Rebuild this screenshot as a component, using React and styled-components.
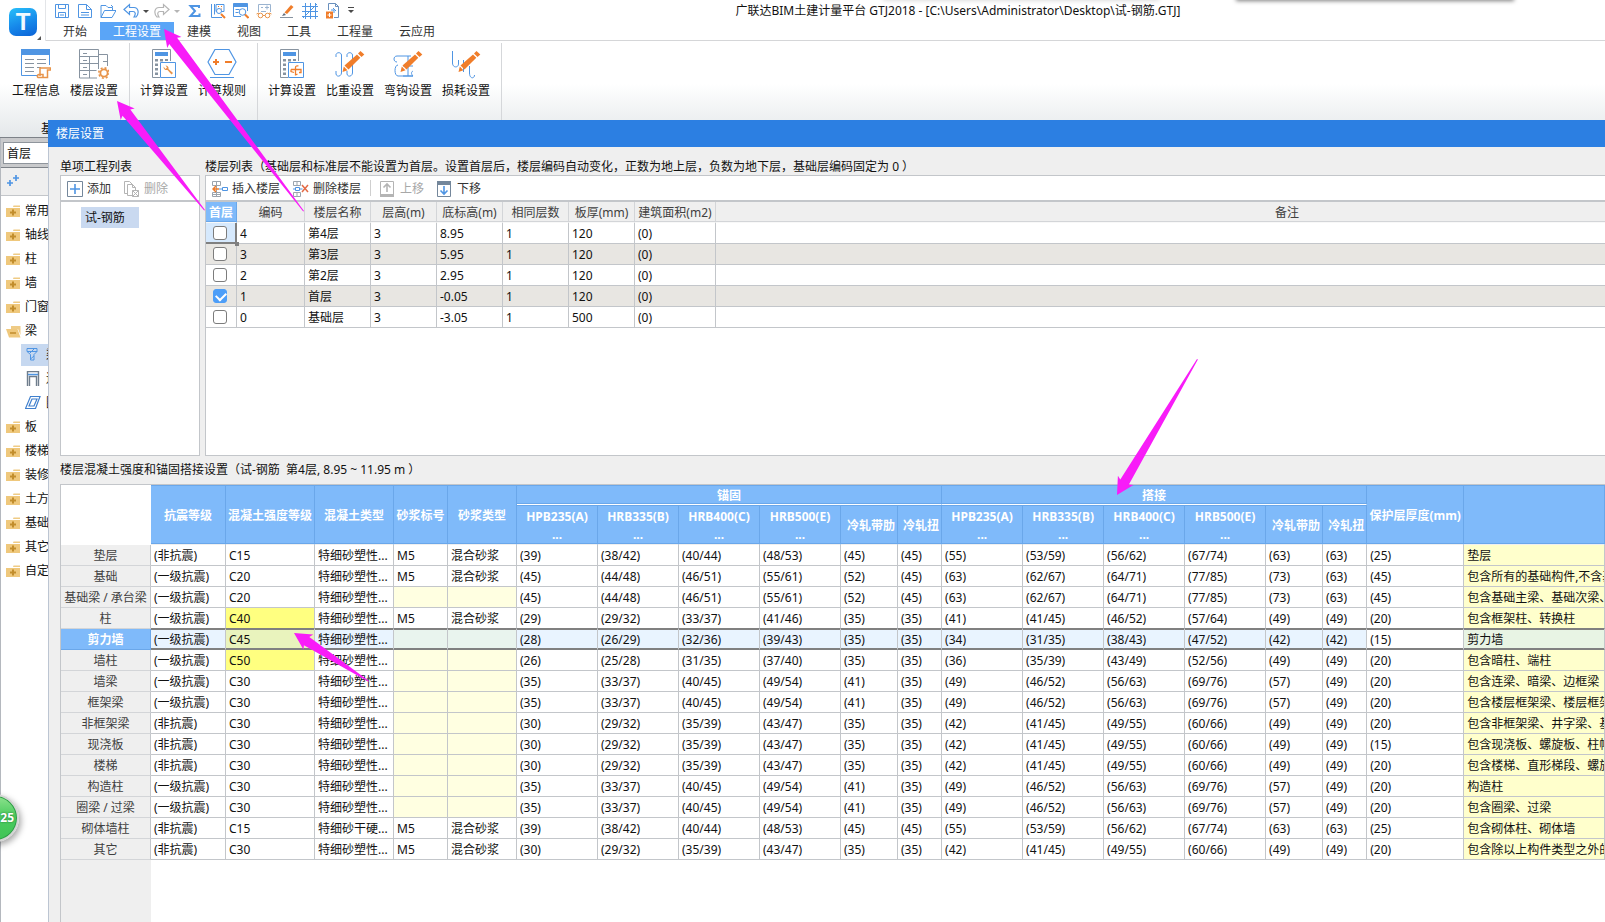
import React, { useState } from "react";
import styled, { createGlobalStyle, css } from "styled-components";

const GlobalStyle = createGlobalStyle`
  * {
    box-sizing: border-box;
  }

  body {
    margin: 0;
    background: #ffffff;
    color: #111111;
    font-family: "Noto Sans", "Noto Sans CJK SC", sans-serif;
    font-size: 12px;
    line-height: 16px;
    overflow: hidden;
  }

  button,
  select,
  input {
    margin: 0;
    font: inherit;
    color: inherit;
  }
`;

const BLUE = "#4f95e3";
const GREY = "#8793a0";
const ORANGE = "#f07d2a";

const tabs = ["开始", "工程设置", "建模", "视图", "工具", "工程量", "云应用"];

const ribbonGroups = [
    {
        caption: "基本设置",
        items: [
            { icon: "info", label: "工程信息" },
            { icon: "floors", label: "楼层设置" },
        ],
    },
    {
        caption: "土建设置",
        items: [
            { icon: "calc", label: "计算设置" },
            { icon: "rules", label: "计算规则" },
        ],
    },
    {
        caption: "钢筋设置",
        items: [
            { icon: "calcBar", label: "计算设置" },
            { icon: "weight", label: "比重设置" },
            { icon: "hook", label: "弯钩设置" },
            { icon: "loss", label: "损耗设置" },
        ],
    },
];

const tree = [
    { label: "常用类型" },
    { label: "轴线" },
    { label: "柱" },
    { label: "墙" },
    { label: "门窗洞" },
    {
        label: "梁",
        open: true,
        children: [
            { icon: "beam", label: "梁(L)", active: true },
            { icon: "lintel", label: "连梁(G)" },
            { icon: "ring", label: "圈梁(E)" },
        ],
    },
    { label: "板" },
    { label: "楼梯" },
    { label: "装修" },
    { label: "土方" },
    { label: "基础" },
    { label: "其它" },
    { label: "自定义" },
];

const floorColumns = [
    { title: "首层", width: 31 },
    { title: "编码", width: 68 },
    { title: "楼层名称", width: 66 },
    { title: "层高(m)", width: 66 },
    { title: "底标高(m)", width: 66 },
    { title: "相同层数", width: 66 },
    { title: "板厚(mm)", width: 66 },
    { title: "建筑面积(m2)", width: 81 },
    { title: "备注" },
];

const floors = [
    ["4", "第4层", "3", "8.95", "1", "120", "(0)", ""],
    ["3", "第3层", "3", "5.95", "1", "120", "(0)", ""],
    ["2", "第2层", "3", "2.95", "1", "120", "(0)", ""],
    ["1", "首层", "3", "-0.05", "1", "120", "(0)", ""],
    ["0", "基础层", "3", "-3.05", "1", "500", "(0)", ""],
];

const strengthWidths = [90, 75, 89, 79, 54, 69, 81, 81, 81, 81, 57, 44, 81, 81, 81, 81, 57, 44, 97];

const steelTypes = ["HPB235(A)", "HRB335(B)", "HRB400(C)", "HRB500(E)", "冷轧带肋", "冷轧扭"];

const MIX = "特细砂塑性...";
const L1 = "(一级抗震)";
const L0 = "(非抗震)";

const members = [
    { name: "垫层", level: L0, grade: "C15", mix: MIX, mortar: true, values: "39 38/42 40/44 48/53 45 45 55 53/59 56/62 67/74 63 63 25", note: "垫层" },
    { name: "基础", level: L1, grade: "C20", mix: MIX, mortar: true, values: "45 44/48 46/51 55/61 52 45 63 62/67 64/71 77/85 73 63 45", note: "包含所有的基础构件,不含基础梁" },
    { name: "基础梁 / 承台梁", level: L1, grade: "C20", mix: MIX, values: "45 44/48 46/51 55/61 52 45 63 62/67 64/71 77/85 73 63 45", note: "包含基础主梁、基础次梁、承台梁" },
    { name: "柱", level: L1, grade: "C40", edited: true, mix: MIX, mortar: true, values: "29 29/32 33/37 41/46 35 35 41 41/45 46/52 57/64 49 49 20", note: "包含框架柱、转换柱" },
    { name: "剪力墙", level: L1, grade: "C45", edited: true, selected: true, mix: MIX, values: "28 26/29 32/36 39/43 35 35 34 31/35 38/43 47/52 42 42 15", note: "剪力墙" },
    { name: "墙柱", level: L1, grade: "C50", edited: true, mix: MIX, values: "26 25/28 31/35 37/40 35 35 36 35/39 43/49 52/56 49 49 20", note: "包含暗柱、端柱" },
    { name: "墙梁", level: L1, grade: "C30", mix: MIX, values: "35 33/37 40/45 49/54 41 35 49 46/52 56/63 69/76 57 49 20", note: "包含连梁、暗梁、边框梁" },
    { name: "框架梁", level: L1, grade: "C30", mix: MIX, values: "35 33/37 40/45 49/54 41 35 49 46/52 56/63 69/76 57 49 20", note: "包含楼层框架梁、楼层框架扁梁" },
    { name: "非框架梁", level: L0, grade: "C30", mix: MIX, values: "30 29/32 35/39 43/47 35 35 42 41/45 49/55 60/66 49 49 20", note: "包含非框架梁、井字梁、基础联系梁" },
    { name: "现浇板", level: L0, grade: "C30", mix: MIX, values: "30 29/32 35/39 43/47 35 35 42 41/45 49/55 60/66 49 49 15", note: "包含现浇板、螺旋板、柱帽" },
    { name: "楼梯", level: L0, grade: "C30", mix: MIX, values: "30 29/32 35/39 43/47 35 35 42 41/45 49/55 60/66 49 49 20", note: "包含楼梯、直形梯段、螺旋梯段" },
    { name: "构造柱", level: L1, grade: "C30", mix: MIX, values: "35 33/37 40/45 49/54 41 35 49 46/52 56/63 69/76 57 49 20", note: "构造柱" },
    { name: "圈梁 / 过梁", level: L1, grade: "C30", mix: MIX, values: "35 33/37 40/45 49/54 41 35 49 46/52 56/63 69/76 57 49 20", note: "包含圈梁、过梁" },
    { name: "砌体墙柱", level: L0, grade: "C15", mix: "特细砂干硬...", mortar: true, values: "39 38/42 40/44 48/53 45 45 55 53/59 56/62 67/74 63 63 25", note: "包含砌体柱、砌体墙" },
    { name: "其它", level: L0, grade: "C30", mix: MIX, mortar: true, values: "30 29/32 35/39 43/47 35 35 42 41/45 49/55 60/66 49 49 20", note: "包含除以上构件类型之外的所有构件" },
];

const arrows = [
    { tip: [164, 29], tail: [304, 211] },
    { tip: [117, 101], tail: [205, 210] },
    { tip: [294, 633], tail: [369, 681] },
    { tip: [1117, 495], tail: [1197, 359] },
];

/* tapered arrow: wide head at the tip, body thinning to nothing at the tail */
function arrowPoints({ tip, tail }) {
    const dx = tail[0] - tip[0];
    const dy = tail[1] - tip[1];
    const len = Math.hypot(dx, dy);
    const at = (along, side) => {
        const x = tip[0] + (dx * along - dy * side) / len;
        const y = tip[1] + (dy * along + dx * side) / len;
        return `${x.toFixed(1)},${y.toFixed(1)}`;
    };
    return [at(0, 0), at(17, 9), at(15, 5), at(len, 1), at(len, 0), at(15, -5), at(17, -9)].join(" ");
}

const pencil = (
    <g>
        <path d="M9.500 16.500 22 5.500l3.300 3.300L13.500 20.500z" fill={ORANGE} />
        <path d="M23 4.500 25.500 2 29.300 5.500 26.500 8z" fill={ORANGE} />
        <path d="M8.800 17.500l3.700 3.700L7.500 23z" fill={ORANGE} />
    </g>
);

const calculator = (
    <g>
        <path d="M8 28.500H.5V.5h18V12" fill="none" stroke={GREY} />
        <path d="M3 3h13v4H3z" fill={BLUE} />
        <path
            d="M3 10h3v2.500H3zM8 10h3v2.500H8zM13 10h3v2H13zM3 14.500h3V17H3zM3 19h3v2.500H3zM3 23.500h3V26H3z"
            fill={GREY}
        />
        <path d="M8.500 13.500h15v15h-15z" fill="#fff" stroke={BLUE} />
    </g>
);

const ribbonIcons = {
    info: (
        <g fill="none">
            <path d="M.5 6v20.500H16M28.500 6v10" stroke={BLUE} />
            <path d="M0 0h29v6H0z" fill={BLUE} />
            <path
                d="M4 10.500h9M4 14.500h9M4 18.500h9M4 22.500h9M16 10.500h9M16 14.500h9M16 18.500h4"
                stroke={GREY}
            />
            <path
                d="M19 27V19h10.500v2h-3v7.500H17c-1.500-1.500 0-3.500 1.500-3H22v3"
                stroke="#e8944a"
                strokeWidth="1.500"
            />
        </g>
    ),
    floors: (
        <g fill="none" stroke={GREY}>
            <path d="M18 29H.5V.5h19V20M.5 7.500h19M.5 14.500h19M.5 21.500h17M10.500 7.500V29M4 4.500h4M4 11.500h4M4 18.500h4M4 25.500h4" />
            <path d="M20 5.500h8.500V17M24 12.500h4" />
            <circle cx="25" cy="24" r="3.600" stroke="#e8944a" strokeWidth="1.800" />
            <circle cx="25" cy="24" r="5.200" stroke="#e8944a" strokeWidth="1.600" strokeDasharray="2 2.080" />
        </g>
    ),
    calc: (
        <g transform="translate(3 0)">
            {calculator}
            <path
                d="M11.500 17.500c0 3 2 4 4 3.500l4 4.500 1.500-1.500-4.500-4c.5-2-1-3.500-3-3.500l1.500 2-1.500 1.500z"
                fill="#e8944a"
            />
        </g>
    ),
    rules: (
        <g fill="none">
            <path d="M8 .5h14l7 12.500-7 12.500H8L1 13z" stroke={BLUE} strokeWidth="1.200" />
            <path d="M3 28.500h24" stroke={BLUE} />
            <path d="M6 13h6M9 10v6M18 13h7" stroke={ORANGE} strokeWidth="2" />
        </g>
    ),
    calcBar: (
        <g fill="none" transform="translate(3 0)">
            {calculator}
            <path
                d="M11 20.500h10v3h-2M11 20.500v2l3 1M15.500 26.500v-8c0-1.500 1.500-2 3-1.500M15.500 26l2-1"
                stroke={ORANGE}
                strokeWidth="1.300"
            />
        </g>
    ),
    weight: (
        <g fill="none">
            <path
                d="M1 8V5.500C2 3 6 3 6.500 6v18c-.5 4-5 4-5.500 1v-3M12 8V5.500C13 3 17 3 17.500 6v18c-.5 4-5 4-5.500 1v-3"
                stroke={BLUE}
            />
            {pencil}
        </g>
    ),
    hook: (
        <g fill="none">
            <path
                d="M4 13C0 13 0 7 4 7h14M5 16c-4 0-4 11 0 11h15c-2-2-2-4 0-5M15 7v20M10 17h10M10 27h10"
                stroke={BLUE}
            />
            {pencil}
        </g>
    ),
    loss: (
        <g fill="none">
            <path
                d="M1.500 2v12c0 5 6 5 6 1V11M12.500 11v12M18.500 17v7c0 6 5 6 5 2"
                stroke={BLUE}
            />
            {pencil}
        </g>
    ),
};

const quickIcons = {
    save: (
        <g fill="none" stroke={BLUE}>
            <path d="M1.500 1.500h13v13h-13zM4.500 1.500v4h7v-4M4.500 14.500v-5h7v5M6 12h4" />
        </g>
    ),
    create: (
        <g fill="none" stroke={BLUE}>
            <path d="M1.500 1.500h8l5 5v8h-13zM9.500 1.500v5h5M4 9.500h8M4 12h8" />
        </g>
    ),
    open: (
        <g fill="none" stroke={BLUE}>
            <path d="M1 14.500V2.500h5l2 2h4.500v3M1 14.500 4.500 7.500H16l-4 7zM11 2l2 2" />
        </g>
    ),
    undo: (
        <path
            d="M1 6.500 6.500 1.500v3h4.500c4.500 0 5.500 6 2 9.500h-2c2-3 1.500-5.500-1-5.500H6.500v3z"
            fill="none"
            stroke={BLUE}
            strokeWidth="1.200"
        />
    ),
    redo: (
        <path
            d="M15 6.500 9.500 1.500v3H5c-4.500 0-5.500 6-2 9.500h2c-2-3-1.500-5.500 1-5.500h3.500v3z"
            fill="none"
            stroke="#b5b5b5"
            strokeWidth="1.200"
        />
    ),
    sum: <path d="M12 5V3H3.500L8 8l-4.500 5H12.500v-2.500" fill="none" stroke={BLUE} strokeWidth="2" />,
    measure: (
        <g fill="none" stroke={BLUE}>
            <path d="M1.500 1v13.500H12M4.500 1v10.500M6 1.500h8v7H6z" />
            <path d="M8 3.500h1M11 3.500h1M8 6h1M11 6h1" stroke={ORANGE} />
            <circle cx="9" cy="8" r="2.500" fill="#fff" />
            <path d="M11 11l4 4" stroke={ORANGE} strokeWidth="2" />
        </g>
    ),
    find: (
        <g fill="none" stroke={BLUE}>
            <path d="M.5.5h14v3H.5z" fill={BLUE} />
            <path d="M.5 3v10.500H8M14.500 3v5M2.500 6.500h4M2.500 9.500h3" />
            <circle cx="9.500" cy="9" r="3.300" />
            <path d="M12 11.500l3.500 3.500" stroke={ORANGE} strokeWidth="2" />
        </g>
    ),
    review: (
        <g fill="none" stroke="#9bb4d0">
            <path d="M2.500 9V1.500h12V9M5 4.500h2M9 4.500h4M11 2.500v4M5 8.500h5" />
            <path d="M.5 11l2.500-1M15.500 11 13 10M7 12.500h2" stroke="#e8944a" />
            <circle cx="4.500" cy="12.500" r="2.300" stroke="#e8944a" />
            <circle cx="11.500" cy="12.500" r="2.300" stroke="#e8944a" />
        </g>
    ),
    brush: (
        <g fill="none">
            <path d="M5.500 9.500 12 2l2.500 2L8 11z" fill={ORANGE} />
            <path d="M5 10l2 2-4 1z" fill="#5e6a78" />
            <path d="M1 14.500h13" stroke={GREY} />
        </g>
    ),
    grid: (
        <path
            d="M0 3.500h16M0 8.500h16M0 13.500h16M3.500 0v16M8.500 0v16M13.500 0v16M1 15 15 1"
            fill="none"
            stroke={BLUE}
        />
    ),
    addPage: (
        <g fill="none">
            <path d="M3.500 7V.5h7l3 3v11H9M10.500.5v3h3" stroke="#6a90bd" />
            <path d="M6 7h3v3M8 5l3 3" stroke={BLUE} />
            <path d="M1 8.500h7v7H1z" fill={ORANGE} />
            <path d="M4.500 10v4M2.500 12h4" stroke="#fff" />
        </g>
    ),
};

const toolIcons = {
    add: (
        <g fill="none">
            <path d="M.5.5h15v15H.5z" stroke="#74879b" />
            <path d="M8 3v10M3 8h10" stroke={BLUE} strokeWidth="1.600" />
        </g>
    ),
    remove: (
        <g fill="none" stroke="#b4b4b4">
            <path d="M3 12.500H.5V.5h5L9 4M3.500 3.500h5l3 3V9M3.500 3.500v11H8M8.500 3.500v3h3" />
            <path d="M8.500 9.500h6v6h-6zM8.500 9.500l6 6M14.500 9.500l-6 6" />
        </g>
    ),
    insertFloor: (
        <g fill="none" stroke="#9ba4ad">
            <path d="M.5.5h8v4h-8zM4.500.5v4M.5 11.500h8v4h-8zM4.500 11.500v4M.5 13.500h8M4.500 4.500v7" />
            <path d="M1 8h6M4 5 1 8l3 3" stroke={ORANGE} strokeWidth="1.500" />
            <path d="M7 8h3M10.500 6.500h5v3h-5z" stroke={BLUE} />
        </g>
    ),
    deleteFloor: (
        <g fill="none" stroke="#9ba4ad">
            <path d="M.5.5h7v4h-7zM4 .5v4M.5 11.500h7v4h-7zM4 11.500v4" />
            <path d="M2.500 6.500h4v3h-4zM0 8h2M6.500 8h3" stroke={BLUE} />
            <path d="M9 4l6 7M15 4l-6 7" stroke="#e36a45" strokeWidth="1.500" />
        </g>
    ),
    up: (
        <g fill="none" stroke="#b4b4b4">
            <path d="M.5.5h13v15H.5z" />
            <path d="M0 13h14v3H0z" fill="#b4b4b4" stroke="none" />
            <path d="M7 11V3M3.500 6.500 7 3l3.500 3.500" strokeWidth="1.600" />
        </g>
    ),
    down: (
        <g fill="none" stroke="#74879b">
            <path d="M.5.5h13v15H.5z" />
            <path d="M0 0h14v4H0z" fill="#74879b" stroke="none" />
            <path d="M7 5v8M3.500 9.500 7 13l3.500-3.500" stroke={BLUE} strokeWidth="1.600" />
        </g>
    ),
};

const treeIcons = {
    closed: (
        <g>
            <path d="M7.500 1.500H14V3H7z" fill="#efcb85" />
            <path d="M0 4h14v9H0z" fill="#efc87c" />
            <path d="M4 8.500h6M7 5.500v6" stroke="#c28d2c" strokeWidth="2" />
        </g>
    ),
    open: (
        <g>
            <path d="M5 2h9.500v9L12 5H5z" fill="#efcb85" />
            <path d="M0 5h11.500L14.500 13.500H3z" fill="#efc87c" />
            <path d="M4 9h6" stroke="#c28d2c" strokeWidth="1.500" />
        </g>
    ),
    beam: <path d="M2 1.500h10v3L9 7.500v5.500H5.500V7.500L2 4.500zM2 4.500h10M5.500 12l3.500-3M5 6l4-4" fill="none" stroke={BLUE} />,
    lintel: (
        <g fill="none">
            <path d="M2.500 15V.5h11V15M4.500 15V5.500h7V15" stroke="#6f7d8c" strokeWidth="1.400" />
            <path d="M3 3.500h10" stroke={BLUE} strokeWidth="1.500" />
        </g>
    ),
    ring: <path d="M5.500 1.500H15l-4.500 12H.5zM7 4h5l-3 7H4z" fill="none" stroke="#3f7fcd" strokeWidth="1.200" />,
};

function Icon({ set, name, size = 16 }) {
    return (
        <svg width={size} height={size} viewBox={`0 0 ${size} ${size}`} aria-hidden="true">
            {set[name]}
        </svg>
    );
}

function QuickAccess() {
    return (
        <QuickBar>
            {["save", "create", "open", "undo"].map((name) => (
                <QuickButton key={name} aria-label={name}>
                    <Icon set={quickIcons} name={name} />
                </QuickButton>
            ))}
            <Caret />
            <QuickButton aria-label="redo">
                <Icon set={quickIcons} name="redo" />
            </QuickButton>
            <Caret $faded />
            {["sum", "measure", "find", "review", "brush", "grid", "addPage"].map((name) => (
                <QuickButton key={name} aria-label={name}>
                    <Icon set={quickIcons} name={name} />
                </QuickButton>
            ))}
            <Caret $barred />
        </QuickBar>
    );
}

function Sidebar() {
    return (
        <SidePanel>
            <FloorPicker>
                <FloorSelect aria-label="楼层" defaultValue="首层">
                    <option>首层</option>
                </FloorSelect>
            </FloorPicker>
            <SideTools>
                <svg width="13" height="13" viewBox="0 0 13 13" aria-hidden="true">
                    <path d="M0 9h6M3 6v6M6 4h6M9 1v6" stroke={BLUE} strokeWidth="1.700" />
                </svg>
            </SideTools>
            <TreeList>
                {tree.map((node) => (
                    <React.Fragment key={node.label}>
                        <TreeItem>
                            <Icon set={treeIcons} name={node.open ? "open" : "closed"} size={15} />
                            {node.label}
                        </TreeItem>
                        {node.children?.map((child) => (
                            <TreeChild key={child.label} $active={child.active}>
                                <Icon set={treeIcons} name={child.icon} size={16} />
                                {child.label}
                            </TreeChild>
                        ))}
                    </React.Fragment>
                ))}
            </TreeList>
        </SidePanel>
    );
}

function FloorTable() {
    const [first, setFirst] = useState("1");

    return (
        <WideGrid>
            <colgroup>
                {floorColumns.map((col) => (
                    <col key={col.title} width={col.width} />
                ))}
            </colgroup>
            <thead>
                <tr>
                    {floorColumns.map((col, i) => (
                        <FloorHead key={col.title} $active={i === 0}>
                            {col.title}
                        </FloorHead>
                    ))}
                </tr>
            </thead>
            <tbody>
                {floors.map((row, i) => (
                    <FloorRow key={row[0]}>
                        <CheckCell $focused={i === 0}>
                            <CheckBox
                                type="checkbox"
                                aria-label={`首层 ${row[1]}`}
                                checked={first === row[0]}
                                onChange={() => setFirst(row[0])}
                            />
                        </CheckCell>
                        {row.map((value, c) => (
                            <Cell key={c}>{value}</Cell>
                        ))}
                    </FloorRow>
                ))}
            </tbody>
        </WideGrid>
    );
}

function StrengthTable() {
    return (
        <Grid>
            <colgroup>
                {strengthWidths.map((width, i) => (
                    <col key={i} width={width} />
                ))}
                <col />
            </colgroup>
            <thead>
                <GroupRow>
                    <Corner rowSpan={2} />
                    {["抗震等级", "混凝土强度等级", "混凝土类型", "砂浆标号", "砂浆类型"].map((title) => (
                        <BlueHead key={title} rowSpan={2}>
                            {title}
                        </BlueHead>
                    ))}
                    <GroupHead colSpan={6}>锚固</GroupHead>
                    <GroupHead colSpan={6}>搭接</GroupHead>
                    <BlueHead rowSpan={2}>保护层厚度(mm)</BlueHead>
                    <BlueHead rowSpan={2} />
                </GroupRow>
                <SteelRow>
                    {[...steelTypes, ...steelTypes].map((title, i) => (
                        <SteelHead key={i} $right={i % 6 > 3}>
                            {title}
                            {i % 6 < 4 && <More>...</More>}
                        </SteelHead>
                    ))}
                </SteelRow>
            </thead>
            <tbody>
                {members.map((m, i) => (
                    <MemberRow key={m.name} $selected={m.selected} $above={members[i + 1]?.selected}>
                        <RowHead scope="row" $selected={m.selected}>
                            {m.name}
                        </RowHead>
                        <Cell>{m.level}</Cell>
                        <Cell $tone={m.edited && "edited"}>{m.grade}</Cell>
                        <Cell>{m.mix}</Cell>
                        <Cell $tone={!m.mortar && "locked"}>{m.mortar && "M5"}</Cell>
                        <Cell $tone={!m.mortar && "locked"}>{m.mortar && "混合砂浆"}</Cell>
                        {m.values.split(" ").map((value, c) => (
                            <Cell key={c}>({value})</Cell>
                        ))}
                        <Cell $tone="note">{m.note}</Cell>
                    </MemberRow>
                ))}
            </tbody>
        </Grid>
    );
}

function FloorDialog() {
    return (
        <Dialog role="dialog" aria-label="楼层设置">
            <DialogTitle>楼层设置</DialogTitle>
            <DialogBody>
                <Upper>
                    <ProjectColumn>
                        <PanelLabel>单项工程列表</PanelLabel>
                        <Panel>
                            <ToolBar>
                                <ToolButton>
                                    <Icon set={toolIcons} name="add" />
                                    添加
                                </ToolButton>
                                <ToolButton disabled>
                                    <Icon set={toolIcons} name="remove" />
                                    删除
                                </ToolButton>
                            </ToolBar>
                            <ProjectItem>试-钢筋</ProjectItem>
                        </Panel>
                    </ProjectColumn>
                    <FloorColumn>
                        <PanelLabel>
                            楼层列表（基础层和标准层不能设置为首层。设置首层后，楼层编码自动变化，正数为地上层，负数为地下层，基础层编码固定为 0 ）
                        </PanelLabel>
                        <Panel $open>
                            <ToolBar>
                                <ToolButton>
                                    <Icon set={toolIcons} name="insertFloor" />
                                    插入楼层
                                </ToolButton>
                                <ToolButton>
                                    <Icon set={toolIcons} name="deleteFloor" />
                                    删除楼层
                                </ToolButton>
                                <ToolDivider />
                                <ToolButton disabled>
                                    <Icon set={toolIcons} name="up" />
                                    上移
                                </ToolButton>
                                <ToolButton>
                                    <Icon set={toolIcons} name="down" />
                                    下移
                                </ToolButton>
                            </ToolBar>
                            <FloorTable />
                        </Panel>
                    </FloorColumn>
                </Upper>
                <StrengthLabel>楼层混凝土强度和锚固搭接设置（试-钢筋&nbsp; 第4层, 8.95 ~ 11.95 m ）</StrengthLabel>
                <StrengthPanel>
                    <StrengthTable />
                    <GutterFill />
                </StrengthPanel>
            </DialogBody>
        </Dialog>
    );
}

export default function App() {
    const [tab, setTab] = useState("工程设置");

    return (
        <Window>
            <GlobalStyle />
            <TopBar>
                <LogoCell>
                    <Logo>T</Logo>
                    <LogoCorner />
                </LogoCell>
                <TopColumn>
                    <TitleRow>
                        <QuickAccess />
                        <WindowTitle>
                            广联达BIM土建计量平台 GTJ2018 - [C:\Users\Administrator\Desktop\试-钢筋.GTJ]
                        </WindowTitle>
                    </TitleRow>
                    <TabRow>
                        {tabs.map((name) => (
                            <Tab key={name} $active={name === tab} onClick={() => setTab(name)}>
                                {name}
                            </Tab>
                        ))}
                    </TabRow>
                </TopColumn>
            </TopBar>
            <Ribbon>
                {ribbonGroups.map((group) => (
                    <RibbonGroup key={group.caption}>
                        <RibbonItems>
                            {group.items.map((item) => (
                                <RibbonButton key={item.icon}>
                                    <Icon set={ribbonIcons} name={item.icon} size={30} />
                                    {item.label}
                                </RibbonButton>
                            ))}
                        </RibbonItems>
                        <GroupCaption>{group.caption}</GroupCaption>
                    </RibbonGroup>
                ))}
            </Ribbon>
            <Sidebar />
            <FloorDialog />
            <EdgeShadow />
            <SpeedBall>25</SpeedBall>
            <ArrowLayer aria-hidden="true">
                {arrows.map((arrow) => (
                    <polygon key={arrow.tip.join()} points={arrowPoints(arrow)} fill="#f81cf8" />
                ))}
            </ArrowLayer>
        </Window>
    );
}

const Window = styled.div`
  position: relative;
  display: flex;
  flex-direction: column;
  height: 100vh;
  overflow: hidden;
`;

const TopBar = styled.header`
  display: flex;
  height: 41px;
`;

const LogoCell = styled.div`
  position: relative;
  width: 46px;
  padding: 8px 0 0 9px;
  border-right: 1px solid #e3e5e8;
`;

const Logo = styled.div`
  width: 28px;
  height: 28px;
  border-radius: 7px;
  background: linear-gradient(160deg, #28c0fa, #1688ea 55%, #0c62d6);
  color: #f2faff;
  font-family: "Liberation Sans", sans-serif;
  font-size: 24px;
  font-weight: 700;
  line-height: 28px;
  text-align: center;
`;

const LogoCorner = styled.span`
  position: absolute;
  right: 4px;
  bottom: 1px;
  border: 2px solid #555555;
  border-top-color: transparent;
  border-left-color: transparent;
`;

const TopColumn = styled.div`
  flex: 1;
  min-width: 0;
  padding-left: 4px;
  border-bottom: 1px solid #d5d6d8;
`;

const TitleRow = styled.div`
  display: flex;
  align-items: center;
  height: 22px;
`;

const QuickBar = styled.div`
  display: flex;
  align-items: center;
`;

const QuickButton = styled.button`
  display: flex;
  justify-content: center;
  width: 23px;
  padding: 0;
  border: 0;
  background: none;
`;

const Caret = styled.span`
  width: 6px;
  height: 3px;
  margin: 0 ${(p) => (p.$faded ? 3 : 1)}px 0 ${(p) => (p.$barred ? 4 : 1)}px;
  border: 3px solid transparent;
  border-top-color: ${(p) => (p.$faded ? "#b5b5b5" : "#4a4a4a")};
  border-bottom: 0;
  ${(p) => p.$barred && "box-shadow: 0 -2px 0 #ffffff, 0 -3px 0 #4a4a4a;"}
`;

const WindowTitle = styled.div`
  flex: 1;
  padding-right: 44px;
  text-align: center;
  white-space: nowrap;
`;

const TabRow = styled.nav`
  display: flex;
  height: 18px;
`;

const Tab = styled.button`
  padding: 2px 13px 0;
  border: 0;
  background: ${(p) => (p.$active ? "#5aa5f7" : "none")};
  color: ${(p) => (p.$active ? "#ffffff" : "#333333")};
  line-height: 16px;
`;

const Ribbon = styled.div`
  display: flex;
  height: 97px;
  padding-left: 2px;
  border-bottom: 1px solid #7d8288;
  background: linear-gradient(#ffffff 45%, #e4e8ea);
`;

const RibbonGroup = styled.section`
  display: flex;
  flex-direction: column;
  justify-content: space-between;
  margin-top: 2px;
  padding: 6px 6px 0 5px;
  border-right: 1px solid #d5d7da;
`;

const RibbonItems = styled.div`
  display: flex;
`;

const RibbonButton = styled.button`
  display: flex;
  flex-direction: column;
  align-items: center;
  gap: 4px;
  width: 58px;
  padding: 0;
  border: 0;
  background: none;
  white-space: nowrap;
`;

const GroupCaption = styled.div`
  text-align: center;
`;

const SidePanel = styled.aside`
  display: flex;
  flex: 1;
  flex-direction: column;
  width: 180px;
  border-left: 1px solid #b4b8be;
`;

const FloorPicker = styled.div`
  height: 30px;
  padding: 4px 2px;
  border-bottom: 1px solid #7d8288;
  background: #c9cacc;
`;

const FloorSelect = styled.select`
  width: 110px;
  height: 22px;
  padding: 2px 3px 0;
  border: 1px solid #8f959c;
  border-radius: 0;
  background: #ffffff;
  appearance: none;
`;

const SideTools = styled.div`
  height: 28px;
  padding: 6px;
  border-bottom: 1px solid #c3c6ca;
  background: #efefef;
`;

const TreeList = styled.ul`
  display: flex;
  flex-direction: column;
  margin: 0;
  padding: 3px 0 0;
  list-style: none;
`;

const TreeItem = styled.li`
  display: flex;
  align-items: center;
  gap: 4px;
  height: 24px;
  padding-left: 5px;
`;

const TreeChild = styled.li`
  display: flex;
  align-items: center;
  gap: 5px;
  height: 22px;
  margin: 1px 0 1px 20px;
  padding-left: 4px;
  background: ${(p) => (p.$active ? "#c6d8f0" : "none")};
`;

const Dialog = styled.section`
  position: absolute;
  inset: 120px 0 0 48px;
  display: flex;
  flex-direction: column;
  border-left: 1px solid #bcc5d2;
  background: #efefef;
`;

const DialogTitle = styled.h1`
  margin: 0 0 0 -1px;
  padding: 1px 0 0 8px;
  background: #2c7fe2;
  color: #ffffff;
  font-size: 12px;
  font-weight: 400;
  line-height: 26px;
`;

const DialogBody = styled.div`
  display: flex;
  flex: 1;
  flex-direction: column;
  min-height: 0;
  padding-left: 11px;
`;

const Upper = styled.div`
  display: flex;
  gap: 5px;
`;

const ProjectColumn = styled.div`
  width: 140px;
`;

const FloorColumn = styled.div`
  flex: 1;
  min-width: 0;
`;

const PanelLabel = styled.h2`
  margin: 0;
  padding-top: 12px;
  font-size: 12px;
  font-weight: 400;
  line-height: 16px;
  white-space: nowrap;
`;

const StrengthLabel = styled(PanelLabel)`
  padding: 6px 0;
`;

const Panel = styled.div`
  height: 281px;
  border: 1px solid #c3c6ca;
  border-right-width: ${(p) => (p.$open ? 0 : 1)}px;
  background: #ffffff;
  overflow: hidden;
`;

const ToolBar = styled.div`
  display: flex;
  align-items: center;
  gap: 3px;
  height: 26px;
  padding: 0 1px;
  border-bottom: 2px solid #c3c6ca;
`;

const ToolButton = styled.button`
  display: flex;
  align-items: center;
  gap: 4px;
  padding: 1px 5px 0;
  border: 0;
  background: none;
  color: #333333;

  &:disabled {
    color: #a8a8a8;
  }
`;

const ToolDivider = styled.span`
  width: 1px;
  height: 16px;
  margin: 0 1px;
  background: #cfcfcf;
`;

const ProjectItem = styled.div`
  width: 58px;
  margin: 5px 0 0 20px;
  padding-left: 4px;
  background: #c9d9f0;
  line-height: 21px;
`;

const Grid = styled.table`
  width: 100%;
  border-spacing: 0;
  table-layout: fixed;
`;

/* the remark column runs on past the edge of the window */
const WideGrid = styled(Grid)`
  width: calc(100% + 254px);
`;

const FloorHead = styled.th`
  height: 21px;
  padding: 2px 0 0;
  border-right: 1px solid ${(p) => (p.$active ? "#6aa7ea" : "#d3d5d8")};
  border-bottom: 1px solid #f8f8f8;
  box-shadow: inset 0 -1px 0 ${(p) => (p.$active ? "#6aa7ea" : "#d3d5d8")};
  background: ${(p) => (p.$active ? "#7fbafa" : "#efefef")};
  color: ${(p) => (p.$active ? "#ffffff" : "#404040")};
  font-weight: ${(p) => (p.$active ? 700 : 400)};
  white-space: nowrap;
`;

const tones = {
    edited: "#ffff80",
    locked: "#ffffe1",
    note: "#ffffcc",
};

const Cell = styled.td`
  height: 21px;
  padding: 2px 0 0 3px;
  border-right: 1px solid #c3c6ca;
  border-bottom: 1px solid #c3c6ca;
  background: ${(p) => tones[p.$tone] || "transparent"};
  line-height: 18px;
  white-space: nowrap;
  overflow: hidden;
`;

const FloorRow = styled.tr`
  &:nth-child(even) {
    background: #e8e6e2;
  }
`;

const CheckCell = styled.td`
  position: relative;
  height: 21px;
  padding: 0 2px 0 0;
  border-right: 1px solid #c3c6ca;
  border-bottom: 1px solid #c3c6ca;
  line-height: 0;
  text-align: center;

  ${(p) =>
      p.$focused &&
      css`
        background: #d6e9fd;
        box-shadow: inset -1px -1px 0 #808080;
        border-color: #808080;

        &::after {
          content: "";
          position: absolute;
          right: -3px;
          bottom: -3px;
          z-index: 1;
          width: 4px;
          height: 4px;
          background: #808080;
        }
      `}
`;

const CheckBox = styled.input`
  position: relative;
  width: 14px;
  height: 14px;
  border: 1px solid #7c7c7c;
  border-radius: 3px;
  background: #ffffff;
  appearance: none;
  vertical-align: middle;

  &:checked {
    border-color: #4d9ef8;
    background: #4d9ef8;
  }

  &:checked::after {
    content: "";
    position: absolute;
    top: 2px;
    left: 2px;
    width: 8px;
    height: 5px;
    border: solid #ffffff;
    border-width: 0 0 2px 2px;
    transform: rotate(-45deg);
  }
`;

const StrengthPanel = styled.div`
  display: flex;
  flex: 1;
  flex-direction: column;
  min-height: 0;
  border-top: 1px solid #c3c6ca;
  border-left: 1px solid #c3c6ca;
  background: #ffffff;
`;

const GutterFill = styled.div`
  flex: 1;
  width: 90px;
  background: #efefef;
`;

const GroupRow = styled.tr`
  height: 20px;
`;

const SteelRow = styled.tr`
  height: 40px;
`;

const Corner = styled.td`
  padding: 0;
  background: #ffffff;
`;

const BlueHead = styled.th`
  padding: 2px 0 0;
  border-right: 1px solid #6aa7ea;
  border-bottom: 1px solid #efefef;
  box-shadow: inset 0 -1px 0 #6aa7ea, inset 0 1px 0 #6aa7ea;
  background: #7fbafa;
  color: #ffffff;
  font-weight: 700;
  white-space: nowrap;
`;

const GroupHead = styled(BlueHead)`
  border-bottom-color: #ffffff;
`;

const SteelHead = styled(BlueHead)`
  padding-right: ${(p) => (p.$right ? 2 : 0)}px;
  line-height: 18px;
  text-align: ${(p) => (p.$right ? "right" : "center")};
`;

const More = styled.span`
  display: block;
`;

const MemberRow = styled.tr`
  ${(p) =>
      p.$above &&
      css`
        ${Cell} {
          border-bottom-color: #808080;
        }
      `}

  ${(p) =>
      p.$selected &&
      css`
        background: #e9f4ff;

        ${Cell} {
          border-bottom-color: #808080;
          box-shadow: inset 0 1px 0 #808080, inset 0 -1px 0 #808080;
        }

        ${Cell}:nth-child(3) {
          background: #e9f3bd;
        }

        ${Cell}:nth-child(5),
        ${Cell}:nth-child(6) {
          background: #e9f4ee;
        }

        ${Cell}:nth-child(19) {
          background: #ffffff;
        }

        ${Cell}:nth-child(20) {
          background: #e8f4e4;
        }
      `}
`;

const RowHead = styled.th`
  height: 21px;
  padding: 2px 0 0;
  border-right: 1px solid ${(p) => (p.$selected ? "#6aa7ea" : "#c3c6ca")};
  border-bottom: 1px solid ${(p) => (p.$selected ? "#6aa7ea" : "#d3d5d8")};
  background: ${(p) => (p.$selected ? "#7fbafa" : "#efefef")};
  color: ${(p) => (p.$selected ? "#ffffff" : "#404040")};
  font-weight: ${(p) => (p.$selected ? 700 : 400)};
  line-height: 18px;
  white-space: nowrap;
`;

const EdgeShadow = styled.div`
  position: absolute;
  top: -4px;
  right: 92px;
  width: 276px;
  height: 4px;
  box-shadow: 0 0 4px 1px rgba(0, 0, 0, 0.5), -354px 0 5px rgba(0, 0, 0, 0.2);
`;

const SpeedBall = styled.div`
  position: absolute;
  top: 794px;
  left: -29px;
  width: 48px;
  height: 48px;
  padding-right: 3px;
  border: 2px solid #d4d4d4;
  border-radius: 50%;
  background: linear-gradient(#8ee28e, #4ccb5f 45%, #3fc455);
  box-shadow: inset 0 0 0 1px #2f9a48, 2px 3px 6px rgba(0, 0, 0, 0.35);
  color: #ffffff;
  font-size: 12px;
  font-weight: 700;
  line-height: 44px;
  text-align: right;
  text-shadow: 0 0 2px #1c6b2e;
`;

const ArrowLayer = styled.svg`
  position: absolute;
  inset: 0;
  width: 100%;
  height: 100%;
  pointer-events: none;
`;
